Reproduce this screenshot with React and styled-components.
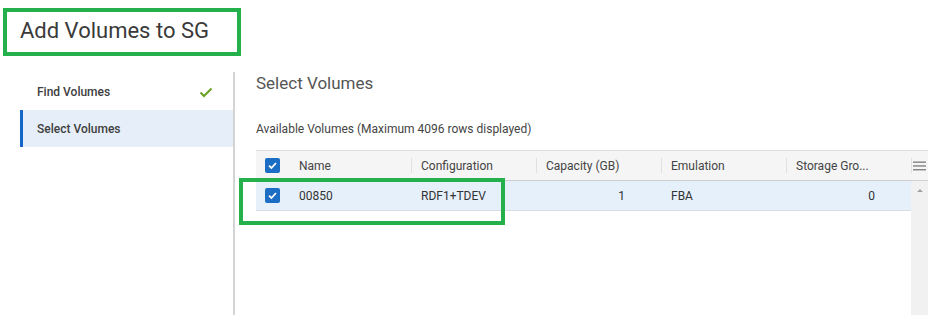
import React from 'react';
import styled, { createGlobalStyle } from 'styled-components';

const GlobalStyle = createGlobalStyle`
	html, body {
		margin: 0;
		padding: 0;
		background: #fff;
		font-family: Roboto, "Liberation Sans", sans-serif;
		color: #333;
	}
`

const Page = styled.div`
	position: relative;
	width: 940px;
	height: 315px;
	overflow: hidden;
`

const Header = styled.div`
	height: 60px;
	padding-left: 20px;
	display: flex;
	align-items: center;
	font-size: 22px;
	color: #3a3a3a;
`

const Body = styled.div`
	display: flex;
	margin-top: 12px;
	height: 243px;
`

const Sidebar = styled.div`
	margin-left: 20px;
	padding-top: 2px;
	width: 213px;
	border-right: 2px solid #d4d4d4;
	display: flex;
	flex-direction: column;
`

const Step = styled.div`
	height: ${p => p.h}px;
	display: flex;
	align-items: center;
	justify-content: space-between;
	padding: 0 20px 0 ${p => p.active ? 14 : 17}px;
	border-left: ${p => p.active ? '3px solid #1467c9' : 'none'};
	background: ${p => p.active ? '#e6eff9' : 'transparent'};
	font-size: 12px;
	font-weight: 500;
	color: #404040;
`

const Main = styled.div`
	flex: 1;
	padding-left: 21px;
	padding-right: 12px;
	display: flex;
	flex-direction: column;
`

const Title = styled.div`
	font-size: 17px;
	line-height: 22px;
	color: #555;
`

const Caption = styled.div`
	margin-top: 27px;
	font-size: 12px;
	line-height: 16px;
	color: #444;
`

const Table = styled.div`
	margin-top: 13px;
	flex: 1;
	display: flex;
	flex-direction: column;
`

const cols = '33px 122px 125px 125px 125px 125px 17px'

const HeadRow = styled.div`
	display: grid;
	grid-template-columns: ${cols};
	height: 29px;
	background: #f5f5f5;
	border-top: 1px solid #dcdcdc;
	border-bottom: 1px solid #cfcfcf;
	font-size: 12px;
	color: #444;
`

const Cell = styled.div`
	position: relative;
	display: flex;
	align-items: center;
	justify-content: ${p => p.right ? 'flex-end' : p.center ? 'center' : 'flex-start'};
	padding: ${p => p.right ? '0 36px 0 0' : p.center ? '0' : '0 0 0 10px'};
	white-space: nowrap;
	${p => p.sep && `
		&::before {
			content: '';
			position: absolute;
			left: 0;
			top: 7px;
			bottom: 7px;
			width: 1px;
			background: #e0e0e0;
		}
	`}
`

const Grid = styled.div`
	flex: 1;
	display: grid;
	grid-template-columns: 1fr 17px;
`

const Rows = styled.div`
	display: flex;
	flex-direction: column;
`

const DataRow = styled.div`
	display: grid;
	grid-template-columns: 33px 122px 125px 125px 125px 125px;
	height: 29px;
	background: #e6f0fa;
	border-bottom: 1px solid #d6dde5;
	font-size: 12px;
	color: #333;
`

const ScrollTrack = styled.div`
	background: #f1f1f1;
	display: flex;
	justify-content: center;
	padding-top: 8px;
`

const UpArrow = styled.div`
	width: 0;
	height: 0;
	border-left: 3px solid transparent;
	border-right: 3px solid transparent;
	border-bottom: 3px solid #a0a0a0;
`

const Box = styled.div`
	width: 15px;
	height: 15px;
	border-radius: 2px;
	background: #1b6ec4;
	display: flex;
	align-items: center;
	justify-content: center;
`

const Marker = styled.div`
	position: absolute;
	border: 4px solid #24b04b;
	box-sizing: border-box;
	pointer-events: none;
`

const Checkbox = () => (
	<Box>
		<svg width="11" height="11" viewBox="0 0 11 11">
			<path d="M2 5.6 L4.4 8 L9 3" fill="none" stroke="#fff" strokeWidth="1.8" />
		</svg>
	</Box>
)

const MenuIcon = () => (
	<svg width="13" height="10" viewBox="0 0 13 10">
		<rect x="0" y="0.5" width="13" height="1.3" fill="#7a7a7a" />
		<rect x="0" y="4.3" width="13" height="1.3" fill="#7a7a7a" />
		<rect x="0" y="8.1" width="13" height="1.3" fill="#7a7a7a" />
	</svg>
)

const Check = () => (
	<svg width="14" height="11" viewBox="0 0 14 11">
		<path d="M1.5 5.5 L5 9 L12.5 1.5" fill="none" stroke="#6aa121" strokeWidth="2" />
	</svg>
)

export default function App() {
	return (
		<Page>
			<GlobalStyle />
			<Header>Add Volumes to SG</Header>
			<Body>
				<Sidebar>
					<Step h={36}>Find Volumes <Check /></Step>
					<Step h={37} active>Select Volumes</Step>
				</Sidebar>
				<Main>
					<Title>Select Volumes</Title>
					<Caption>Available Volumes (Maximum 4096 rows displayed)</Caption>
					<Table>
						<HeadRow>
							<Cell center><Checkbox /></Cell>
							<Cell>Name</Cell>
							<Cell sep>Configuration</Cell>
							<Cell sep>Capacity (GB)</Cell>
							<Cell sep>Emulation</Cell>
							<Cell sep>Storage Gro...</Cell>
							<Cell sep center><MenuIcon /></Cell>
						</HeadRow>
						<Grid>
							<Rows>
								<DataRow>
									<Cell center><Checkbox /></Cell>
									<Cell>00850</Cell>
									<Cell>RDF1+TDEV</Cell>
									<Cell right>1</Cell>
									<Cell>FBA</Cell>
									<Cell right>0</Cell>
								</DataRow>
							</Rows>
							<ScrollTrack><UpArrow /></ScrollTrack>
						</Grid>
					</Table>
				</Main>
			</Body>
			<Marker style={{ left: 3, top: 8, width: 238, height: 48 }} />
			<Marker style={{ left: 239, top: 178, width: 266, height: 47 }} />
		</Page>
	)
}
